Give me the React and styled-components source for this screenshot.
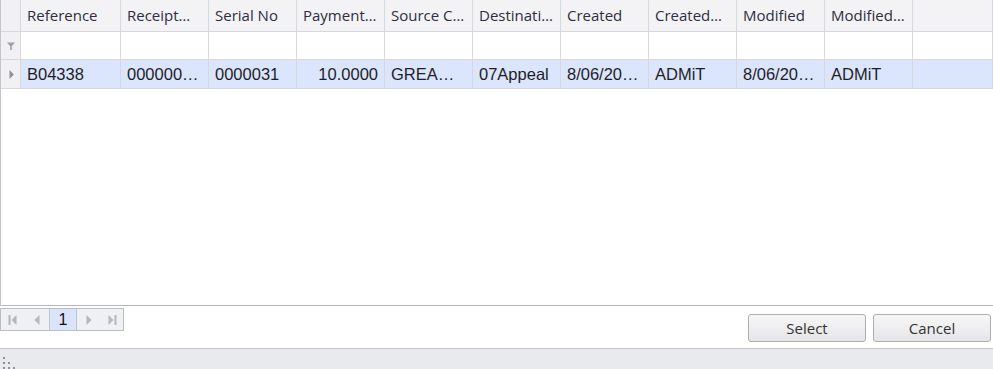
import React from 'react';
import styled, { createGlobalStyle } from 'styled-components';

const GlobalStyle = createGlobalStyle`
  html, body {
    margin: 0;
    padding: 0;
    background: #ffffff;
  }
  * {
    box-sizing: border-box;
  }
`;

const COLS = '20px 100px repeat(9, 88px) 1fr';

const Window = styled.div`
  width: 993px;
  height: 369px;
  display: flex;
  flex-direction: column;
  background: #ffffff;
  overflow: hidden;
`;

const GridPanel = styled.div`
  height: 306px;
  border-left: 1px solid #c3c5cc;
  border-bottom: 1px solid #b4b6bd;
  background: #ffffff;
`;

const Row = styled.div`
  display: grid;
  grid-template-columns: ${COLS};
  height: ${p => p.$h}px;
  border-bottom: 1px solid #d7d8de;
  background: ${p => p.$bg || '#ffffff'};
`;

const Indicator = styled.div`
  background: #f1f1f4;
  border-right: 1px solid #d7d8de;
  display: flex;
  align-items: center;
  justify-content: center;
  padding-left: 1px;
`;

const HeaderCell = styled.div`
  border-right: 1px solid #d7d8de;
  padding: 0 6px 2px;
  display: flex;
  align-items: center;
  font-family: "Open Sans", "Noto Sans", sans-serif;
  font-size: 15px;
  color: #2e2e3e;
  white-space: nowrap;
  overflow: hidden;
`;

const Cell = styled.div`
  border-right: 1px solid #d7d8de;
  padding: 0 6px;
  display: flex;
  align-items: center;
  justify-content: ${p => (p.$right ? 'flex-end' : 'flex-start')};
  font-family: "Liberation Sans", Arial, sans-serif;
  font-size: 16.5px;
  color: #1e1e28;
  white-space: nowrap;
  overflow: hidden;
`;

const Footer = styled.div`
  height: 43px;
  display: flex;
  justify-content: space-between;
  align-items: flex-start;
  border-bottom: 1px solid #c6c8ce;
`;

const Pager = styled.div`
  margin-top: 2px;
  width: 124px;
  height: 23px;
  display: flex;
  border: 1px solid #bbbdc4;
  background: #eff0f3;
`;

const NavButton = styled.div`
  width: ${p => p.$w}px;
  display: flex;
  align-items: center;
  justify-content: center;
`;

const PageCell = styled.div`
  width: 28px;
  display: flex;
  align-items: center;
  justify-content: center;
  background: #dae5fb;
  border-left: 1px solid #c3c6ce;
  border-right: 1px solid #c3c6ce;
  font-family: "Liberation Sans", Arial, sans-serif;
  font-size: 16px;
  color: #111;
`;

const Buttons = styled.div`
  display: flex;
  gap: 7px;
  margin-top: 8px;
  margin-right: 2px;
`;

const Button = styled.button`
  width: 118px;
  height: 28px;
  border: 1px solid #acadb2;
  border-radius: 3px;
  background: linear-gradient(#f6f6f7, #e6e6e8);
  font-family: "Open Sans", "Noto Sans", sans-serif;
  font-size: 15px;
  color: #333;
  padding: 0;
  cursor: pointer;
`;

const StatusBar = styled.div`
  flex: 1;
  background: #e9eaee;
  position: relative;
`;

const Grip = styled.svg`
  position: absolute;
  left: 2px;
  bottom: 0;
`;

const FilterIcon = () => (
  <svg width="10" height="10" viewBox="0 0 10 10">
    <path d="M1 1.5h8L5.8 5.2V9H4.2V5.2z" fill="#9ea1a8" />
  </svg>
);

const RowArrow = () => (
  <svg width="7" height="11" viewBox="0 0 7 11">
    <path d="M1.5 1L5.8 5.5L1.5 10z" fill="#8e9199" />
  </svg>
);

const NavIcon = ({ dir, bar }) => (
  <svg width="12" height="14" viewBox="0 0 12 14">
    {dir === 'left' ? (
      <>
        {bar && <rect x="1.5" y="2" width="2" height="10" fill="#b4b6bd" />}
        <path d={bar ? 'M9.5 2L4.5 7L9.5 12z' : 'M8.5 2L3.5 7L8.5 12z'} fill="#b4b6bd" />
      </>
    ) : (
      <>
        <path d={bar ? 'M2.5 2L7.5 7L2.5 12z' : 'M3.5 2L8.5 7L3.5 12z'} fill="#b4b6bd" />
        {bar && <rect x="8.5" y="2" width="2" height="10" fill="#b4b6bd" />}
      </>
    )}
  </svg>
);

const headers = [
  'Reference',
  'Receipt…',
  'Serial No',
  'Payment…',
  'Source C…',
  'Destinati…',
  'Created',
  'Created…',
  'Modified',
  'Modified…',
];

const record = [
  { v: 'B04338' },
  { v: '000000…' },
  { v: '0000031' },
  { v: '10.0000', right: true },
  { v: 'GREA…' },
  { v: '07Appeal' },
  { v: '8/06/20…' },
  { v: 'ADMiT' },
  { v: '8/06/20…' },
  { v: 'ADMiT' },
];

export default function App() {
  return (
    <>
      <GlobalStyle />
      <Window>
        <GridPanel>
          <Row $h={32} $bg="#f3f3f5">
            <Indicator />
            {headers.map(h => (
              <HeaderCell key={h}>{h}</HeaderCell>
            ))}
            <HeaderCell />
          </Row>
          <Row $h={28}>
            <Indicator>
              <FilterIcon />
            </Indicator>
            {headers.map(h => (
              <Cell key={h} />
            ))}
            <Cell />
          </Row>
          <Row $h={29} $bg="#dbe5fb">
            <Indicator>
              <RowArrow />
            </Indicator>
            {record.map((c, i) => (
              <Cell key={i} $right={c.right}>
                {c.v}
              </Cell>
            ))}
            <Cell />
          </Row>
        </GridPanel>
        <Footer>
          <Pager>
            <NavButton $w={24}>
              <NavIcon dir="left" bar />
            </NavButton>
            <NavButton $w={24}>
              <NavIcon dir="left" />
            </NavButton>
            <PageCell>1</PageCell>
            <NavButton $w={24}>
              <NavIcon dir="right" />
            </NavButton>
            <NavButton $w={22}>
              <NavIcon dir="right" bar />
            </NavButton>
          </Pager>
          <Buttons>
            <Button>Select</Button>
            <Button>Cancel</Button>
          </Buttons>
        </Footer>
        <StatusBar>
          <Grip width="14" height="14" viewBox="0 0 14 14">
            <g fill="#8f9199">
              <rect x="1" y="2" width="2" height="2" />
              <rect x="1" y="7" width="2" height="2" />
              <rect x="6" y="7" width="2" height="2" />
              <rect x="1" y="12" width="2" height="2" />
              <rect x="6" y="12" width="2" height="2" />
              <rect x="11" y="12" width="2" height="2" />
            </g>
          </Grip>
        </StatusBar>
      </Window>
    </>
  );
}
